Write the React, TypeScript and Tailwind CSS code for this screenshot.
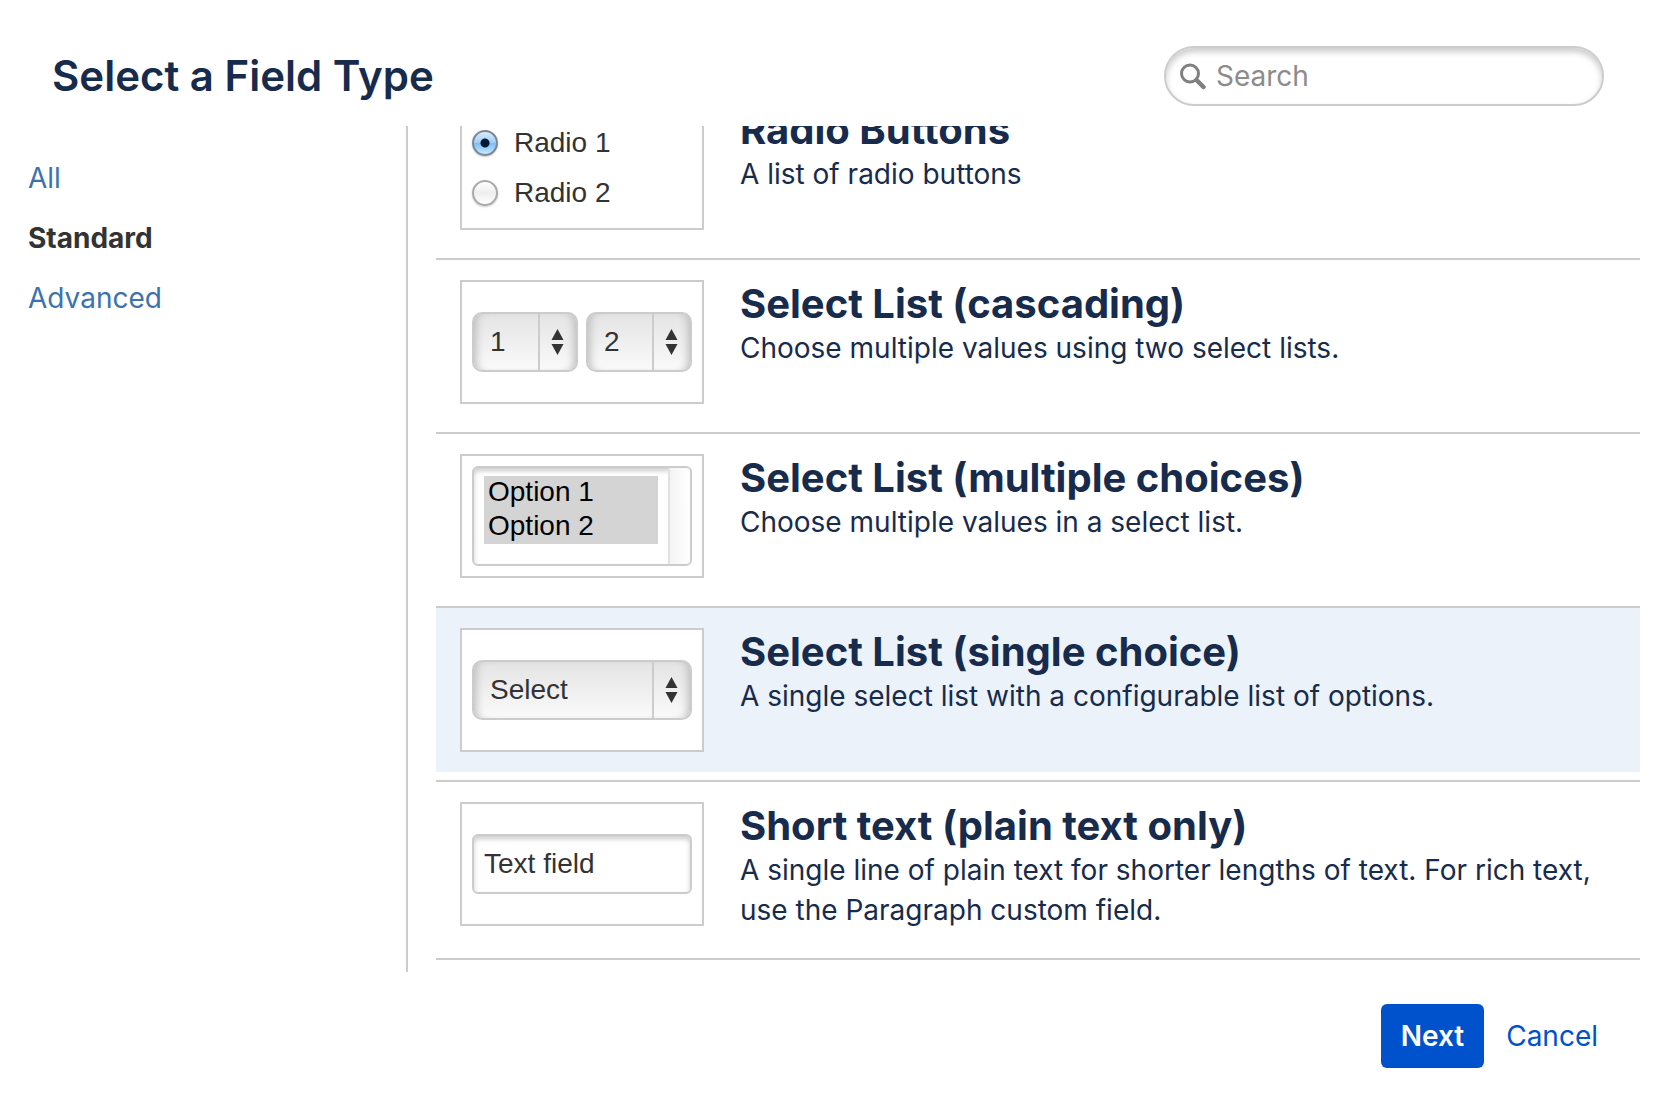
import { useState, type ReactNode } from 'react';
import clsx from 'clsx';

const categories = ['All', 'Standard', 'Advanced'];

function StepperArrows() {
  return (
    <span className="pointer-events-none absolute inset-y-[2px] right-[2px] flex w-[38px] items-center justify-center border-l-2 border-[#ccc]">
      <svg width="14" height="26" viewBox="0 0 14 26" fill="#333">
        <path d="M6.500 0 12.500 11h-12z" />
        <path d="M6.500 26 .5 15h12z" />
      </svg>
    </span>
  );
}

function SelectPreview({ label, value }: { label: string; value: string }) {
  return (
    <div className="relative min-w-0 flex-1">
      <select
        aria-label={label}
        className="block h-[60px] w-full appearance-none rounded-[10px] border-2 border-[#ccc] bg-linear-to-b from-[#e4e4e4] to-[#fafafa] pl-4 text-[28px] text-[#333] shadow-[inset_8px_0_8px_-6px_#bbb,inset_-8px_0_8px_-6px_#bbb] outline-none"
      >
        <option>{value}</option>
      </select>
      <StepperArrows />
    </div>
  );
}

function RadioPreview() {
  return (
    <div className="flex h-full flex-col justify-end pb-[10px]">
      {['Radio 1', 'Radio 2'].map((name, i) => (
        <label key={name} className="flex h-[50px] items-center gap-4 text-[28px] text-[#333]">
          <input
            type="radio"
            name="radio-preview"
            defaultChecked={i === 0}
            className="size-[26px] appearance-none rounded-full border-2 border-[#aaa] bg-linear-to-b from-[#fff] via-[#eee] to-[#fff] shadow-[0_1px_2px_#ccc] checked:border-[#7b8794] checked:bg-[radial-gradient(circle,#001a33_4px,transparent_5px),linear-gradient(#dcecfb,#9bcdf8_50%,#7fbdf7_52%,#c4e8ff)]"
          />
          {name}
        </label>
      ))}
    </div>
  );
}

function MultiSelectPreview() {
  return (
    <div className="flex h-[100px] w-full overflow-hidden rounded-md border-2 border-[#ccc] shadow-[inset_0_3px_5px_#ccc]">
      <select
        multiple
        size={2}
        aria-label="Multiple options"
        defaultValue={['Option 1', 'Option 2']}
        className="min-w-0 flex-1 appearance-none overflow-hidden bg-transparent px-[10px] py-2 text-[28px] outline-none"
      >
        <option className="h-[34px] min-h-0 bg-[linear-gradient(#d4d4d4,#d4d4d4)] px-1 py-0 leading-[34px] text-black">Option 1</option>
        <option className="h-[34px] min-h-0 bg-[linear-gradient(#d4d4d4,#d4d4d4)] px-1 py-0 leading-[34px] text-black">Option 2</option>
      </select>
      <div className="w-[22px] border-l-2 border-[#e2e2e2] bg-linear-to-r from-[#f3f3f3] to-[#fff]" />
    </div>
  );
}

function TextPreview() {
  return (
    <input
      type="text"
      aria-label="Text field"
      defaultValue="Text field"
      className="h-[60px] w-full rounded-md border-2 border-[#ccc] px-[10px] text-[28px] text-[#333] shadow-[inset_0_3px_5px_#ccc] outline-none"
    />
  );
}

interface FieldType {
  name: string;
  description: string;
  preview: ReactNode;
}

const fieldTypes: FieldType[] = [
  {
    name: 'Radio Buttons',
    description: 'A list of radio buttons',
    preview: <RadioPreview />,
  },
  {
    name: 'Select List (cascading)',
    description: 'Choose multiple values using two select lists.',
    preview: (
      <div className="flex w-full gap-2">
        <SelectPreview label="First value" value="1" />
        <SelectPreview label="Second value" value="2" />
      </div>
    ),
  },
  {
    name: 'Select List (multiple choices)',
    description: 'Choose multiple values in a select list.',
    preview: <MultiSelectPreview />,
  },
  {
    name: 'Select List (single choice)',
    description: 'A single select list with a configurable list of options.',
    preview: <SelectPreview label="Single value" value="Select" />,
  },
  {
    name: 'Short text (plain text only)',
    description:
      'A single line of plain text for shorter lengths of text. For rich text, use the Paragraph custom field.',
    preview: <TextPreview />,
  },
];

export default function App() {
  const [category, setCategory] = useState('Standard');
  const [selected, setSelected] = useState('Select List (single choice)');

  return (
    <div className="flex h-screen flex-col bg-white font-['Inter',sans-serif] text-[28px] text-[#172b4d]">
      <header className="flex items-center justify-between px-[52px] pt-[46px] pb-5">
        <h1 className="text-[42px] leading-[60px] font-semibold">Select a Field Type</h1>
        <label className="flex h-[60px] w-[440px] items-center gap-[10px] rounded-full border-2 border-[#ccc] px-[14px] shadow-[inset_0_4px_6px_#ccc]">
          <svg width="26" height="28" viewBox="0 0 26 28" fill="none" stroke="#808080">
            <circle cx="10" cy="11.500" r="8.500" strokeWidth="3" />
            <path d="m16.500 18 7 7" strokeWidth="4.500" strokeLinecap="round" />
          </svg>
          <input
            type="search"
            aria-label="Search"
            placeholder="Search"
            className="min-w-0 flex-1 bg-transparent outline-none placeholder:text-[#8c8c8c]"
          />
        </label>
      </header>

      <div className="flex min-h-0 flex-1">
        <nav className="w-[408px] shrink-0 border-r-2 border-[#ccc] pt-[22px] pl-7">
          {categories.map((name) => (
            <a
              key={name}
              href="#"
              onClick={() => setCategory(name)}
              className={clsx(
                'block leading-[60px]',
                name === category ? 'font-bold text-[#333]' : 'text-[#3b73af]'
              )}
            >
              {name}
            </a>
          ))}
        </nav>

        {/* reversed column keeps the list scrolled to its end */}
        <main className="mr-4 ml-7 flex min-w-0 flex-1 flex-col-reverse overflow-y-auto [scrollbar-width:none]">
          <ul className="pb-3">
            {fieldTypes.map((field) => (
              <li key={field.name} className="border-t-2 border-[#ccc] pb-2 last:border-b-2">
                <div
                  onClick={() => setSelected(field.name)}
                  className={clsx('flex gap-9 py-5 pr-4 pl-6', field.name === selected && 'bg-[#ebf2f9]')}
                >
                  <div className="flex h-[124px] w-[244px] shrink-0 items-center border-2 border-[#ccc] bg-white px-[10px] font-['Liberation_Sans',sans-serif]">
                    {field.preview}
                  </div>
                  <div>
                    <h2 className="text-[40px] leading-[48px] font-bold">{field.name}</h2>
                    <p className="leading-[40px]">{field.description}</p>
                  </div>
                </div>
              </li>
            ))}
          </ul>
        </main>
      </div>

      <footer className="flex items-center justify-end gap-[22px] px-[58px] pt-8 pb-[50px]">
        <button className="h-16 rounded-md bg-[#0052cc] px-5 font-semibold text-white">Next</button>
        <button className="text-[#0052cc]">Cancel</button>
      </footer>
    </div>
  );
}
